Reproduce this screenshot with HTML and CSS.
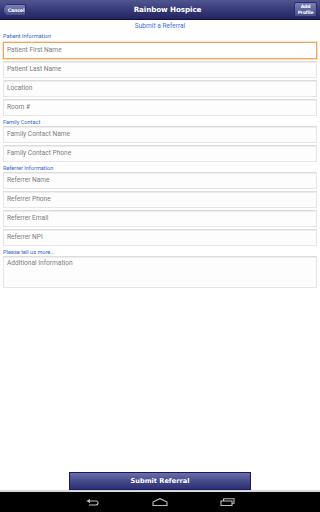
FILE: index.html
```html
<!DOCTYPE html>
<html>
<head>
<meta charset="utf-8">
<link rel="stylesheet" href="styles.css">
</head>
<body>
<div class="app">
  <header class="topbar">
    <button class="btn-cancel">Cancel</button>
    <h1 class="title">Rainbow Hospice</h1>
    <button class="btn-add">Add<br>Profile</button>
  </header>
  <main class="form">
    <div class="form-title">Submit a Referral</div>
    <div class="label">Patient Information</div>
    <div class="field focus">Patient First Name</div>
    <div class="field">Patient Last Name</div>
    <div class="field">Location</div>
    <div class="field">Room #</div>
    <div class="label">Family Contact</div>
    <div class="field">Family Contact Name</div>
    <div class="field">Family Contact Phone</div>
    <div class="label">Referrer Information</div>
    <div class="field">Referrer Name</div>
    <div class="field">Referrer Phone</div>
    <div class="field">Referrer Email</div>
    <div class="field">Referrer NPI</div>
    <div class="label">Please tell us more...</div>
    <div class="field area">Additional Information</div>
  </main>
  <div class="footer">
    <button class="btn-submit">Submit Referral</button>
  </div>
  <nav class="navbar">
    <svg class="nav-icon" width="14" height="8" viewBox="0 0 14 8">
      <path d="M4 1.5 L1.5 3 L4 4.5 M1.5 3 H10 A2 2 0 0 1 10 7 H3" fill="none" stroke="#bdbdbd" stroke-width="1.1"/>
    </svg>
    <svg class="nav-icon" width="16" height="8" viewBox="0 0 16 8">
      <path d="M1 7.5 H15 V4 L8 0.7 L1 4 Z" fill="none" stroke="#bdbdbd" stroke-width="1.1"/>
    </svg>
    <svg class="nav-icon" width="15" height="8" viewBox="0 0 15 8">
      <path d="M1 3 H12 V7.5 H1 Z M3.5 3 V0.8 H14 V5.2 H12" fill="none" stroke="#bdbdbd" stroke-width="1.1"/>
    </svg>
  </nav>
</div>
</body>
</html>
```

FILE: styles.css
```css
* { box-sizing: border-box; margin: 0; padding: 0; }
html, body { width: 320px; height: 512px; background: #ffffff; }
body { font-family: Roboto, "Liberation Sans", sans-serif; overflow: hidden; }

.app { display: flex; flex-direction: column; height: 512px; }

.topbar {
  height: 20px;
  flex: none;
  display: flex;
  align-items: center;
  justify-content: space-between;
  padding: 0 3px 0 3px;
  background: linear-gradient(#52568f 0%, #3a3d7c 45%, #23245f 100%);
  border-bottom: 1px solid #0d0e45;
}
.title {
  font-family: Tahoma, "DejaVu Sans", sans-serif;
  font-weight: bold;
  font-size: 7.2px;
  color: #ffffff;
  letter-spacing: -0.1px;
  margin-left: 15px;
}
.btn-cancel {
  width: 23px;
  height: 12px;
  font-family: "DejaVu Sans", sans-serif;
  font-weight: bold;
  font-size: 4.8px;
  color: #ffffff;
  letter-spacing: -0.2px;
  background: linear-gradient(#7a7fb4, #474c8c);
  border: 1px solid #2a2d68;
  border-radius: 2px;
  clip-path: polygon(4px 0, 100% 0, 100% 100%, 4px 100%, 0 50%);
  padding-left: 3px;
  margin-top: 1px;
}
.btn-add {
  width: 23px;
  height: 15px;
  font-family: "DejaVu Sans", sans-serif;
  font-weight: bold;
  font-size: 4.6px;
  line-height: 5.4px;
  color: #ffffff;
  letter-spacing: -0.2px;
  background: linear-gradient(#7a7fb4, #474c8c);
  border: 1px solid #2a2d68;
  border-radius: 2px;
}

.form {
  flex: 1;
  display: flex;
  flex-direction: column;
  padding: 0 3px;
}
.form-title {
  text-align: center;
  color: #3f72cf;
  font-size: 6.6px;
  height: 13px;
  line-height: 13px;
}
.label {
  color: #2f64cf;
  font-size: 5.6px;
  height: 8px;
  line-height: 6px;
  padding-top: 2px;
}
.form-title + .label { padding-top: 0; line-height: 7px; }
.field {
  height: 17px;
  margin-top: 1px;
  margin-bottom: 1px;
  border: 1px solid #e6e6e6;
  border-top-color: #dcdcdc;
  box-shadow: inset 0 1px 0 #ededed;
  background: #fdfdfd;
  color: #7d7d7d;
  font-size: 6.6px;
  line-height: 15px;
  padding-left: 3px;
}
.field.focus {
  border: 1px solid #f5a55a;
  box-shadow: 0 0 0 0.5px #f8c08a;
  background: #ffffff;
}
.field.area {
  height: 32px;
  line-height: 13px;
}

.footer {
  height: 33px;
  flex: none;
  display: flex;
  justify-content: center;
  align-items: flex-end;
  border-bottom: 2px solid #d8d8d8;
}
.btn-submit {
  width: 182px;
  height: 18px;
  font-family: Tahoma, "DejaVu Sans", sans-serif;
  font-weight: bold;
  font-size: 6.6px;
  color: #ffffff;
  background: linear-gradient(#6a6fa8 0%, #464b8b 50%, #2d3173 100%);
  border: 1px solid #171a5a;
}

.navbar {
  height: 20px;
  flex: none;
  background: #000000;
  display: flex;
  justify-content: center;
  align-items: center;
  gap: 52px;
}
.nav-icon { display: block; }
```
